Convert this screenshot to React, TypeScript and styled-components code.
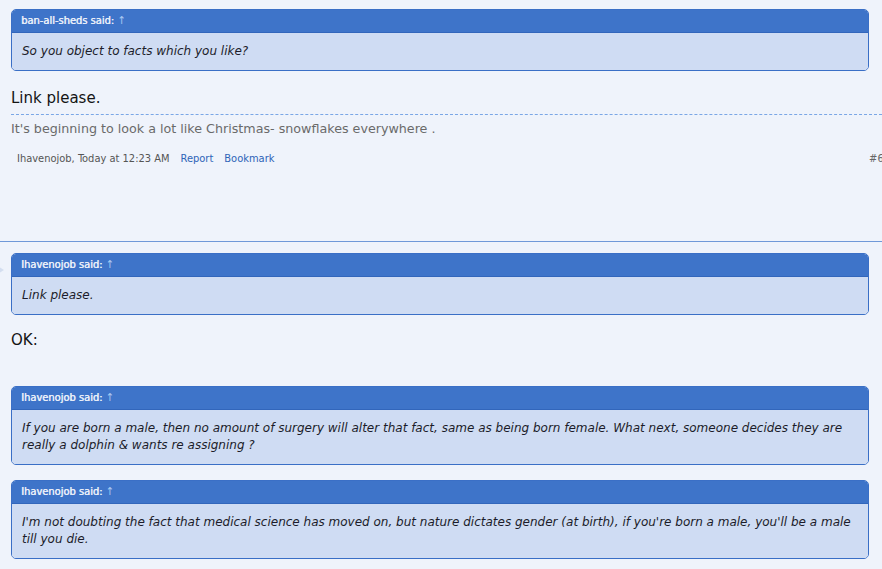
import styled, { createGlobalStyle } from 'styled-components'

const GlobalStyle = createGlobalStyle`
  html, body {
    margin: 0;
    padding: 0;
    background: #eff3fb;
  }
  body {
    font-family: "DejaVu Sans", Verdana, sans-serif;
    overflow: hidden;
  }
`

const Page = styled.div`
  width: 882px;
  height: 569px;
  overflow: hidden;
`

const Post = styled.div<{ last?: boolean }>`
  position: relative;
  display: flex;
  flex-direction: column;
  padding: ${props => props.last ? '11px 0 0 11px' : '9px 0 0 11px'};
  border-bottom: ${props => props.last ? 'none' : '1px solid #6f98d8'};
  height: ${props => props.last ? 'auto' : '232px'};
`

const Arrow = styled.span`
  position: absolute;
  left: -6px;
  top: 22px;
  width: 0;
  height: 0;
  border-top: 6px solid transparent;
  border-bottom: 6px solid transparent;
  border-left: 10px solid #d4def0;
`

const Quote = styled.div`
  width: 856px;
  border: 1px solid #3a6fc6;
  border-radius: 5px;
  overflow: hidden;
  margin-bottom: 15px;
`

const QuoteHead = styled.div`
  height: 22px;
  line-height: 21px;
  background: #3e74c9;
  border-bottom: 1px solid #3266bb;
  padding: 0 8px 0 9px;
  font-family: "DejaVu Sans Condensed", Tahoma, sans-serif;
  font-size: 11px;
  color: #eaeff9;
  text-shadow: 0.4px 0 0 #eaeff9;
`

const Up = styled.span`
  color: #a9c9f2;
  text-shadow: none;
`

const QuoteBody = styled.div`
  background: #cfdcf3;
  padding: 10px 10px;
  font-size: 12px;
  line-height: 17px;
  font-style: italic;
  color: #1c1c2a;
`

const Message = styled.div<{ top?: number; gap?: number }>`
  font-size: 15px;
  line-height: 19px;
  color: #141414;
  margin-top: ${props => props.top || 0}px;
  margin-bottom: ${props => props.gap || 0}px;
`

const Signature = styled.div`
  margin-top: 6px;
  border-top: 1px dashed #7aa6e6;
  padding-top: 5px;
  font-size: 12.7px;
  line-height: 17px;
  color: #6a6a6a;
`

const Meta = styled.div`
  display: flex;
  align-items: baseline;
  margin-top: 15px;
  padding-left: 6px;
  font-family: "DejaVu Sans Condensed", Tahoma, sans-serif;
  font-size: 11px;
  color: #555;
`

const MetaLink = styled.a`
  color: #2e63b8;
  margin-left: 11px;
  text-decoration: none;
`

const PostNumber = styled.span`
  margin-left: auto;
  margin-right: -8px;
  color: #666;
`

type QuoteProps = { author: string; children: React.ReactNode }

const QuoteBlock = ({ author, children }: QuoteProps) => (
  <Quote>
    <QuoteHead>{author} said: <Up>↑</Up></QuoteHead>
    <QuoteBody>{children}</QuoteBody>
  </Quote>
)

export default function App() {
  return (
    <Page>
      <GlobalStyle />
      <Post>
        <QuoteBlock author="ban-all-sheds">So you object to facts which you like?</QuoteBlock>
        <Message top={3}>Link please.</Message>
        <Signature>It's beginning to look a lot like Christmas- snowflakes everywhere .</Signature>
        <Meta>
          Ihavenojob, Today at 12:23 AM
          <MetaLink href="#">Report</MetaLink>
          <MetaLink href="#">Bookmark</MetaLink>
          <PostNumber>#60</PostNumber>
        </Meta>
      </Post>
      <Post last>
        <Arrow />
        <QuoteBlock author="Ihavenojob">Link please.</QuoteBlock>
        <Message top={1} gap={36}>OK:</Message>
        <QuoteBlock author="Ihavenojob">
          If you are born a male, then no amount of surgery will alter that fact, same as being born female. What next, someone decides they are really a dolphin &amp; wants re assigning ?
        </QuoteBlock>
        <QuoteBlock author="Ihavenojob">
          I'm not doubting the fact that medical science has moved on, but nature dictates gender (at birth), if you're born a male, you'll be a male till you die.
        </QuoteBlock>
      </Post>
    </Page>
  )
}
